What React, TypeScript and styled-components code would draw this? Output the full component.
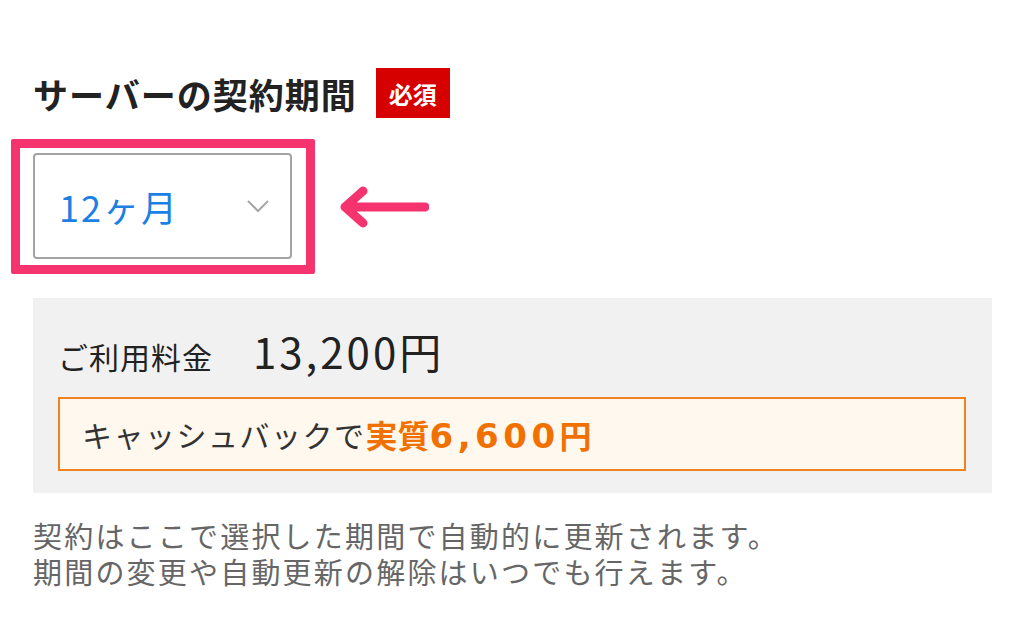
import React from 'react';
import styled, { createGlobalStyle } from 'styled-components';

const GlobalStyle = createGlobalStyle`
  body {
    margin: 0;
    background: #ffffff;
    font-family: 'Noto Sans CJK JP', 'Noto Sans', sans-serif;
  }
`;

const Page = styled.div`
  width: 1024px;
  height: 633px;
  padding: 66px 32px 0 33px;
  box-sizing: border-box;
  overflow: hidden;
`;

const TitleRow = styled.div`
  display: flex;
  align-items: center;
  gap: 19px;
  height: 54px;
`;

const Title = styled.h2`
  margin: 0;
  font-size: 35px;
  font-weight: 700;
  color: #222222;
  letter-spacing: 1px;
`;

const RequiredBadge = styled.span`
  display: inline-flex;
  align-items: center;
  justify-content: center;
  width: 74px;
  height: 50px;
  background: #d70000;
  color: #ffffff;
  font-size: 24px;
  font-weight: 700;
`;

const SelectRow = styled.div`
  display: flex;
  align-items: center;
  margin: 19px 0 0 -22px;
`;

const Highlight = styled.div`
  border: 9px solid #f5336f;
  border-radius: 2px;
  padding: 5px 14px 6px 13px;
`;

const SelectBox = styled.div`
  display: flex;
  align-items: center;
  justify-content: space-between;
  width: 259px;
  height: 106px;
  box-sizing: border-box;
  border: 2px solid #a3a3a3;
  border-radius: 4px;
  padding: 0 20px 0 24px;
  color: #1b7fe3;
  font-size: 36px;
  letter-spacing: 2px;
`;

const Arrow = styled.svg`
  margin-left: 24px;
  display: block;
`;

const PricePanel = styled.div`
  margin-top: 24px;
  background: #f1f1f1;
  padding: 22px 26px 22px 25px;
`;

const PriceRow = styled.div`
  display: flex;
  align-items: baseline;
  gap: 40px;
  color: #222222;
`;

const PriceLabel = styled.span`
  font-size: 30px;
  letter-spacing: 1px;
`;

const PriceValue = styled.span`
  font-size: 42px;
  letter-spacing: 3px;
`;

const CashbackBox = styled.div`
  margin-top: 16px;
  height: 74px;
  box-sizing: border-box;
  display: flex;
  align-items: center;
  padding-left: 22px;
  border: 2px solid #f08221;
  background: #fff8ef;
  color: #333333;
  font-size: 30px;
  letter-spacing: 1.5px;
`;

const Emphasis = styled.strong`
  color: #f07000;
  font-weight: 700;
  font-size: 32px;
  letter-spacing: 0;
`;

const Figures = styled.span`
  font-family: 'DejaVu Sans', 'Noto Sans CJK JP', sans-serif;
  font-size: 34px;
  letter-spacing: 4.5px;
`;

const Note = styled.p`
  margin: 24px 0 0;
  color: #666666;
  font-size: 29px;
  line-height: 36px;
  letter-spacing: 2.2px;
`;

export default function App() {
  return (
    <>
      <GlobalStyle />
      <Page>
        <TitleRow>
          <Title>サーバーの契約期間</Title>
          <RequiredBadge>必須</RequiredBadge>
        </TitleRow>
        <SelectRow>
          <Highlight>
            <SelectBox>
              <span>12ヶ月</span>
              <svg width="24" height="14" viewBox="0 0 24 14">
                <path d="M2 2 L12 12 L22 2" fill="none" stroke="#a6a6a6" strokeWidth="2" />
              </svg>
            </SelectBox>
          </Highlight>
          <Arrow width="90" height="44" viewBox="0 0 90 44">
            <path
              d="M86 22 H6 M24 6 L6 22 L24 38"
              fill="none"
              stroke="#f5336f"
              strokeWidth="9"
              strokeLinecap="round"
              strokeLinejoin="round"
            />
          </Arrow>
        </SelectRow>
        <PricePanel>
          <PriceRow>
            <PriceLabel>ご利用料金</PriceLabel>
            <PriceValue>13,200円</PriceValue>
          </PriceRow>
          <CashbackBox>
            キャッシュバックで
            <Emphasis>
              実質<Figures>6,600</Figures>円
            </Emphasis>
          </CashbackBox>
        </PricePanel>
        <Note>
          契約はここで選択した期間で自動的に更新されます。
          <br />
          期間の変更や自動更新の解除はいつでも行えます。
        </Note>
      </Page>
    </>
  );
}
